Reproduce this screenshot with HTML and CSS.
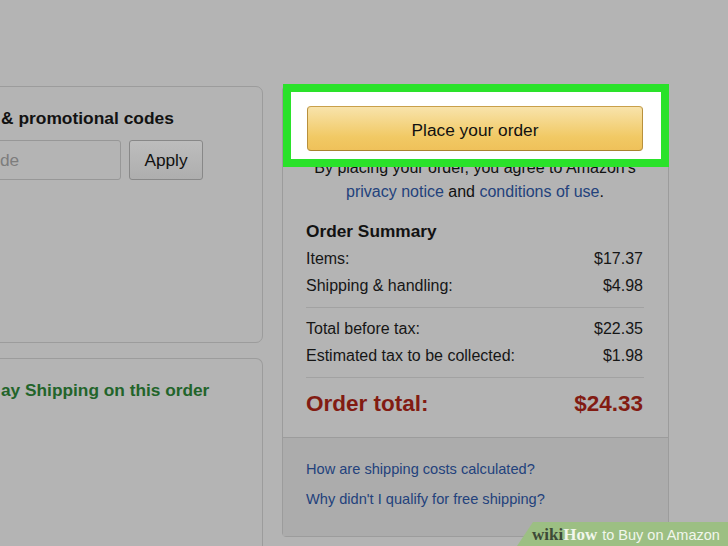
FILE: index.html
```html
<!DOCTYPE html>
<html lang="en">
<head>
<meta charset="utf-8">
<title>Place your order</title>
<link rel="stylesheet" href="styles.css">
</head>
<body>
<div class="page">
  <div class="left-col">
    <section class="card promo">
      <h3 class="promo-title">&amp; promotional codes</h3>
      <div class="promo-row">
        <div class="code-input"><span class="placeholder">de</span></div>
        <button class="apply-btn">Apply</button>
      </div>
    </section>
    <section class="card shipping">
      <p class="ship-note">ay Shipping on this order</p>
    </section>
  </div>

  <aside class="summary">
    <div class="summary-main">
      <button class="place-btn">Place your order</button>
      <p class="agree">By placing your order, you agree to Amazon's<br><a class="link">privacy notice</a> and <a class="link">conditions of use</a>.</p>
      <h3 class="sum-title">Order Summary</h3>
      <div class="row"><span>Items:</span><span>$17.37</span></div>
      <div class="row"><span>Shipping &amp; handling:</span><span>$4.98</span></div>
      <div class="rule first"></div>
      <div class="row"><span>Total before tax:</span><span>$22.35</span></div>
      <div class="row"><span>Estimated tax to be collected:</span><span>$1.98</span></div>
      <div class="rule second"></div>
      <div class="row total"><span>Order total:</span><span>$24.33</span></div>
    </div>
    <div class="summary-links">
      <a class="link help">How are shipping costs calculated?</a>
      <a class="link help">Why didn't I qualify for free shipping?</a>
    </div>
  </aside>
</div>

<div class="highlight"></div>

<div class="watermark"><span class="wm-wiki">wiki</span><span class="wm-how">How</span><span class="wm-title">to Buy on Amazon</span></div>
</body>
</html>
```

FILE: styles.css
```css
* { box-sizing: border-box; }

html, body {
  margin: 0;
  padding: 0;
}

body {
  width: 728px;
  height: 546px;
  overflow: hidden;
  position: relative;
  background: #b4b4b4;
  color: #111;
  font-family: "Liberation Sans", Arial, sans-serif;
}

.page {
  display: flex;
  align-items: flex-start;
  gap: 19px;
  padding-top: 86px;
}

/* ---------- left column ---------- */
.left-col {
  flex: 0 0 283px;
  margin-left: -20px;
  display: flex;
  flex-direction: column;
  gap: 15px;
}

.card {
  border: 1px solid #9c9c9c;
  border-radius: 7px;
  padding: 20px 0 0 20px;
}

.promo { height: 257px; }

.shipping {
  height: 188px;
  border-bottom: 0;
  border-radius: 7px 7px 0 0;
}

.promo-title {
  margin: 0;
  font-size: 17.4px;
  line-height: 22px;
  font-weight: bold;
  color: #121212;
}

.promo-row {
  display: flex;
  gap: 8px;
  margin-top: 11px;
  margin-left: -60px;
}

.code-input {
  width: 180px;
  height: 40px;
  border: 1px solid #979797;
  border-radius: 3px;
  display: flex;
  align-items: center;
  padding-left: 58px;
  font-size: 17.3px;
}

.placeholder { color: #7d7d7d; }

.apply-btn {
  width: 74px;
  height: 40px;
  border: 1px solid #888;
  border-radius: 3px;
  background: linear-gradient(#bdbdbd, #aeaeae);
  font-family: inherit;
  font-size: 17.3px;
  color: #111;
  padding: 0;
}

.ship-note {
  margin: 0;
  font-size: 17.3px;
  line-height: 22px;
  font-weight: bold;
  color: #22642a;
}

/* ---------- summary panel ---------- */
.summary {
  flex: 0 0 387px;
  border: 1px solid #9c9c9c;
  border-radius: 4px;
}

.summary-main {
  padding: 19px 24px 18px 23px;
}

.place-btn {
  position: relative;
  z-index: 2;
  display: block;
  width: 336px;
  height: 45px;
  margin: 0 1px;
  border: 1px solid;
  border-color: #c9a04a #b8903c #a8832f;
  border-radius: 4px;
  background: linear-gradient(#f8e3ab, #f1c964 70%, #efc15a);
  font-family: inherit;
  font-size: 17.3px;
  color: #111;
  padding: 3px 0 0;
}

.agree {
  margin: 5px 0 0;
  font-size: 16px;
  line-height: 24px;
  text-align: center;
  color: #111;
}

.link { color: #23427c; }

.sum-title {
  margin: 15px 0 0;
  font-size: 17.3px;
  line-height: 24px;
  font-weight: bold;
  color: #121212;
}

.sum-title + .row { margin-top: 2px; }

.row {
  display: flex;
  justify-content: space-between;
  font-size: 16px;
  line-height: 27px;
  padding-right: 1px;
  color: #161616;
}

.rule {
  height: 1px;
  background: #a2a2a2;
  margin: 8px 0 7px;
}

.rule.second { margin: 8px 0 11px; }

.row.total {
  font-size: 22.5px;
  line-height: 30px;
  font-weight: bold;
  color: #821b12;
}

.summary-links {
  border-top: 1px solid #9c9c9c;
  background: #acacac;
  padding: 21px 23px 27px;
  display: flex;
  flex-direction: column;
  gap: 10px;
}

.help {
  font-size: 14.6px;
  line-height: 20px;
}

/* ---------- overlays ---------- */
.highlight {
  position: absolute;
  left: 283px;
  top: 84px;
  width: 386px;
  height: 83px;
  border: 8px solid #2ae22a;
  background: #fff;
  z-index: 1;
}

.watermark {
  position: absolute;
  right: 0;
  bottom: 0;
  height: 24px;
  width: 211px;
  padding-left: 15px;
  display: flex;
  align-items: baseline;
  background: #9cbf83;
  clip-path: polygon(16px 0, 100% 0, 100% 100%, 0 100%);
  line-height: 26px;
  white-space: nowrap;
}

.wm-wiki, .wm-how {
  font-family: "Liberation Serif", "DejaVu Serif", serif;
  font-weight: bold;
  font-size: 17px;
}

.wm-wiki { color: #3d4a37; }
.wm-how { color: #f1f6ec; }

.wm-title {
  font-size: 14.5px;
  color: #f1f6ec;
  margin-left: 5px;
}
```
